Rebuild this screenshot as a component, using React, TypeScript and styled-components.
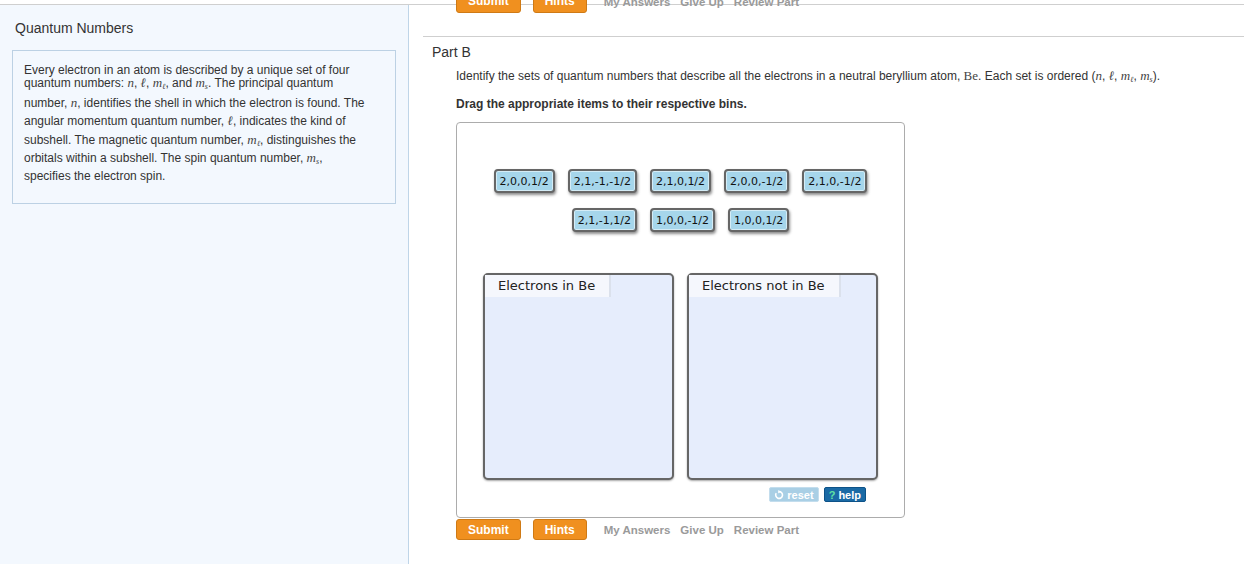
import React from 'react';
import styled, { createGlobalStyle } from 'styled-components';

const Global = createGlobalStyle`
  html, body { margin: 0; padding: 0; background: #fff; }
  body { font-family: "Liberation Sans", Arial, sans-serif; color: #333; }
`;

const Page = styled.div`
  height: 564px;
  overflow: hidden;
  padding-top: 4px;
  box-sizing: border-box;
  display: flex;
  flex-direction: column;
`;

const TopRule = styled.div`
  height: 1px;
  background: #cfcfcf;
  flex: none;
`;

const Columns = styled.div`
  flex: 1;
  display: flex;
  min-height: 0;
`;

const Sidebar = styled.aside`
  width: 409px;
  flex: none;
  box-sizing: border-box;
  background: #f3f8fe;
  border-right: 1px solid #bfd5e8;
  padding: 15px 12px 0 12px;
`;

const SideTitle = styled.div`
  font-size: 14px;
  line-height: 16px;
  padding-left: 3px;
  color: #333;
  margin-bottom: 14px;
`;

const InfoBox = styled.div`
  border: 1px solid #bcd1e4;
  padding: 12px 11px 20px;
  font-size: 12px;
  color: #333;
`;

const Line = styled.div<{ $mt: number }>`
  line-height: 14px;
  white-space: nowrap;
  margin-top: ${(p) => p.$mt}px;
`;

const V = styled.span`
  font-family: "Liberation Serif", "DejaVu Serif", serif;
  font-style: italic;
  font-size: 13px;
  color: #444;
  sub {
    font-size: 8px;
    vertical-align: -2px;
    line-height: 0;
  }
`;

const R = styled.span`
  font-family: "Liberation Serif", "DejaVu Serif", serif;
  font-size: 13px;
  color: #444;
`;

const Main = styled.main`
  flex: 1;
  padding-left: 14px;
  display: flex;
  flex-direction: column;
  min-width: 0;
`;

const Actions = styled.div<{ $top?: boolean }>`
  display: flex;
  align-items: center;
  padding-left: 33px;
  margin-top: ${(p) => (p.$top ? '-13px' : '1px')};
`;

const OrangeButton = styled.button<{ $clipped?: boolean }>`
  height: 21px;
  box-sizing: border-box;
  background: #f0901f;
  border: 1px solid #cf7a15;
  border-radius: 3px;
  color: #fff;
  font-family: "Liberation Sans", Arial, sans-serif;
  font-weight: bold;
  font-size: 12px;
  padding: ${(p) => (p.$clipped ? '0 11px 3px' : '0 11px')};
  margin-right: 12px;
  cursor: pointer;
`;

const LinkText = styled.span<{ $clipped?: boolean }>`
  font-family: "Liberation Sans", Arial, sans-serif;
  font-weight: bold;
  font-size: 11.5px;
  color: #9a9a9a;
  margin-left: 5px;
  margin-right: 5px;
  position: relative;
  top: ${(p) => (p.$clipped ? '-1px' : '0')};
`;

const PartSection = styled.section`
  margin-top: 23px;
  border-top: 1px solid #cfcfcf;
`;

const PartTitle = styled.h2`
  margin: 0;
  padding: 7px 0 0 9px;
  font-size: 14px;
  line-height: 16px;
  font-weight: normal;
  color: #333;
`;

const PartBody = styled.div`
  padding-left: 33px;
`;

const Prompt = styled.p`
  margin: 9px 0 0;
  font-size: 12px;
  line-height: 14px;
  color: #333;
  white-space: nowrap;
`;

const Instruction = styled.p`
  margin: 14px 0 0;
  font-size: 12px;
  line-height: 14px;
  font-weight: bold;
  color: #333;
`;

const DragBox = styled.div`
  margin-top: 11px;
  width: 449px;
  box-sizing: border-box;
  border: 1px solid #acacac;
  border-radius: 4px;
  padding: 46px 0 15px;
  display: flex;
  flex-direction: column;
  align-items: center;
`;

const ChipRow = styled.div<{ $first?: boolean }>`
  display: flex;
  justify-content: center;
  gap: 13px;
  margin-top: ${(p) => (p.$first ? '0' : '15px')};
`;

const Chip = styled.div`
  height: 24px;
  box-sizing: border-box;
  padding: 0 4px;
  display: flex;
  align-items: center;
  background: #a6d6eb;
  border: 2px solid #666;
  border-radius: 4px;
  box-shadow: inset 0 0 0 1px #d4ecf6, 1px 2px 3px rgba(0, 0, 0, 0.45);
  font-family: "DejaVu Sans", Verdana, sans-serif;
  font-size: 11px;
  color: #111;
  white-space: nowrap;
`;

const Bins = styled.div`
  display: flex;
  gap: 13px;
  margin-top: 41px;
`;

const Bin = styled.div`
  width: 191px;
  height: 207px;
  box-sizing: border-box;
  background: #e6edfc;
  border: 2px solid #666;
  border-radius: 5px;
  box-shadow: 0 1px 2px rgba(0, 0, 0, 0.35);
  display: flex;
  flex-direction: column;
  align-items: flex-start;
`;

const BinLabel = styled.div`
  height: 22px;
  line-height: 22px;
  padding: 0 14px 0 13px;
  background: #f5f7fd;
  border-right: 2px solid #dbe1ec;
  font-family: "DejaVu Sans", Verdana, sans-serif;
  font-size: 13px;
  color: #222;
  white-space: nowrap;
`;

const Controls = styled.div`
  align-self: stretch;
  display: flex;
  justify-content: flex-end;
  gap: 5px;
  padding-right: 38px;
  margin-top: 7px;
`;

const SmallBtn = styled.div<{ $kind: 'reset' | 'help' }>`
  height: 15px;
  box-sizing: border-box;
  display: flex;
  align-items: center;
  gap: 3px;
  padding: 0 4px;
  font-family: "Liberation Sans", Arial, sans-serif;
  font-weight: bold;
  font-size: 11px;
  color: #fff;
  background: ${(p) => (p.$kind === 'reset' ? '#a9cfe5' : '#1a6aa5')};
  border: 1px solid ${(p) => (p.$kind === 'reset' ? '#c3dded' : '#0d5288')};
  border-radius: 2px;
`;

const Q = styled.span`
  color: #5fe2a4;
`;

const chipsRow1 = ['2,0,0,1/2', '2,1,-1,-1/2', '2,1,0,1/2', '2,0,0,-1/2', '2,1,0,-1/2'];
const chipsRow2 = ['2,1,-1,1/2', '1,0,0,-1/2', '1,0,0,1/2'];

function ActionRow({ top }: { top?: boolean }) {
  return (
    <Actions $top={top}>
      <OrangeButton $clipped={top}>Submit</OrangeButton>
      <OrangeButton $clipped={top}>Hints</OrangeButton>
      <LinkText $clipped={top}>My Answers</LinkText>
      <LinkText $clipped={top}>Give Up</LinkText>
      <LinkText $clipped={top}>Review Part</LinkText>
    </Actions>
  );
}

export default function App() {
  return (
    <>
      <Global />
      <Page>
        <TopRule />
        <Columns>
          <Sidebar>
            <SideTitle>Quantum Numbers</SideTitle>
            <InfoBox>
              <Line $mt={0}>Every electron in an atom is described by a unique set of four</Line>
              <Line $mt={-1}>
                quantum numbers: <V>n</V>, <V>ℓ</V>, <V>m<sub>ℓ</sub></V>, and <V>m<sub>s</sub></V>. The principal quantum
              </Line>
              <Line $mt={6}>
                number, <V>n</V>, identifies the shell in which the electron is found. The
              </Line>
              <Line $mt={4}>
                angular momentum quantum number, <V>ℓ</V>, indicates the kind of
              </Line>
              <Line $mt={5}>
                subshell. The magnetic quantum number, <V>m<sub>ℓ</sub></V>, distinguishes the
              </Line>
              <Line $mt={4}>
                orbitals within a subshell. The spin quantum number, <V>m<sub>s</sub></V>,
              </Line>
              <Line $mt={4}>specifies the electron spin.</Line>
            </InfoBox>
          </Sidebar>
          <Main>
            <ActionRow top />
            <PartSection>
              <PartTitle>Part B</PartTitle>
              <PartBody>
                <Prompt>
                  Identify the sets of quantum numbers that describe all the electrons in a neutral beryllium atom, <R>Be</R>. Each set is ordered (<V>n</V>, <V>ℓ</V>, <V>m<sub>ℓ</sub></V>, <V>m<sub>s</sub></V>).
                </Prompt>
                <Instruction>Drag the appropriate items to their respective bins.</Instruction>
                <DragBox>
                  <ChipRow $first>
                    {chipsRow1.map((c) => (
                      <Chip key={c}>{c}</Chip>
                    ))}
                  </ChipRow>
                  <ChipRow>
                    {chipsRow2.map((c) => (
                      <Chip key={c}>{c}</Chip>
                    ))}
                  </ChipRow>
                  <Bins>
                    <Bin>
                      <BinLabel>Electrons in Be</BinLabel>
                    </Bin>
                    <Bin>
                      <BinLabel>Electrons not in Be</BinLabel>
                    </Bin>
                  </Bins>
                  <Controls>
                    <SmallBtn $kind="reset">
                      <svg width="10" height="10" viewBox="0 0 10 10">
                        <path d="M2.2 3.2 A3.4 3.4 0 1 0 5 1.6" fill="none" stroke="#fff" strokeWidth="1.6" />
                        <path d="M4.2 0 L6.4 1.7 L4.2 3.4 Z" fill="#fff" />
                      </svg>
                      reset
                    </SmallBtn>
                    <SmallBtn $kind="help">
                      <Q>?</Q> help
                    </SmallBtn>
                  </Controls>
                </DragBox>
              </PartBody>
            </PartSection>
            <ActionRow />
          </Main>
        </Columns>
      </Page>
    </>
  );
}
